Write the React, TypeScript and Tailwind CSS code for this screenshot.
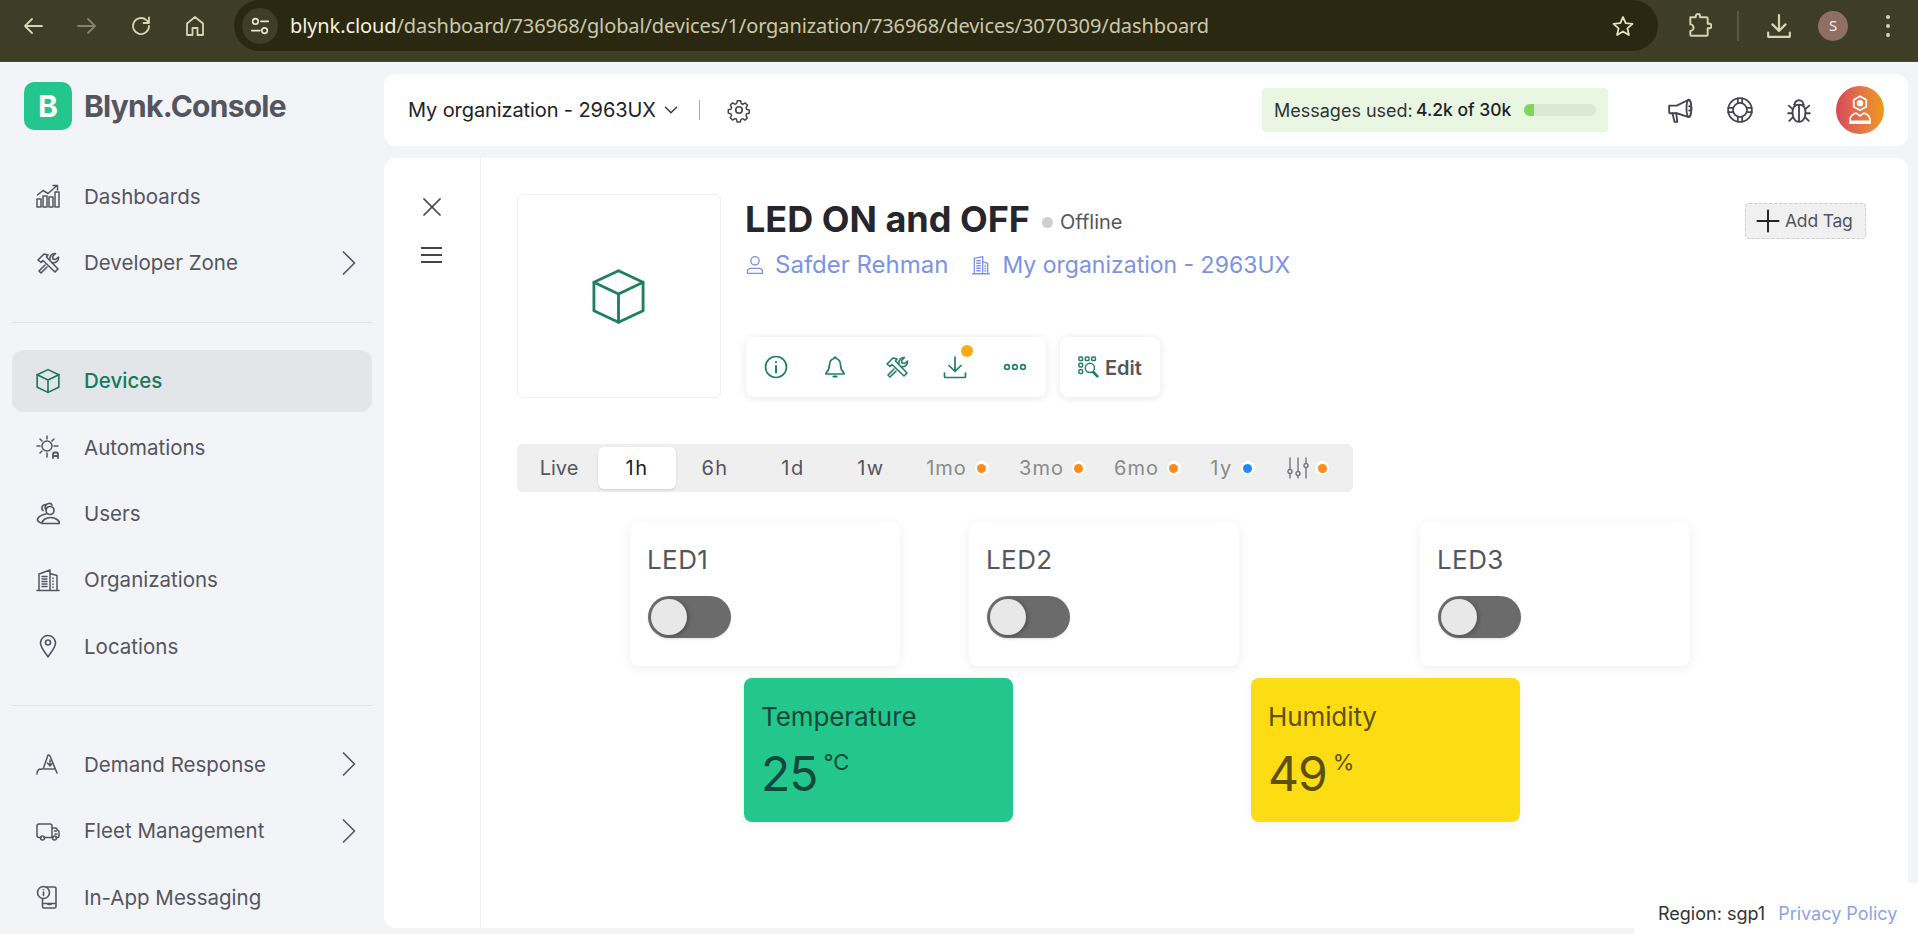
import { ChevronDown, ChevronRight, Plus, X } from "lucide-react";
import type { ReactNode } from "react";

const Svg = ({ className, children, sw = 1.6 }: { className: string; children: ReactNode; sw?: number }) => (
  <svg viewBox="0 0 24 24" fill="none" stroke="currentColor" strokeWidth={sw} strokeLinecap="round" strokeLinejoin="round" className={className}>
    {children}
  </svg>
);

type IconProps = { className: string };

const ChartIcon = ({ className }: IconProps) => (
  <Svg className={className} sw={1.5}>
    <rect x="1" y="15" width="4" height="8" />
    <rect x="7" y="12" width="4" height="11" />
    <rect x="13" y="13" width="4" height="10" />
    <rect x="19" y="8" width="4" height="15" />
    <path d="M1.5 11 7 6.5l5 3L20.500 2M17 1.500h4.500V6" />
  </Svg>
);
const ToolsIcon = ({ className }: IconProps) => (
  <Svg className={className} sw={1.6}>
    <path d="m2 9 6-6 4 1-1.500 2L22 18l-3 3L7 9.500 5 11.500z" />
    <path d="M14 8.500a5 5 0 0 1 5.500-6l-3 3 .5 2.500 2.500.5 3-2.500a5 5 0 0 1-6.500 5.500M9 14l-6 6 2 2 6-6" />
  </Svg>
);
const CubeIcon = ({ className, sw = 1.5 }: IconProps & { sw?: number }) => (
  <Svg className={className} sw={sw}>
    <path d="M12 1.500 22 6.200v11.600L12 22.500 2 17.800V6.200z" />
    <path d="M2 6.200 12 11l10-4.800M12 11v11.500" />
  </Svg>
);
const AutomationIcon = ({ className }: IconProps) => (
  <Svg className={className} sw={1.5}>
    <circle cx="11" cy="11" r="5" />
    <path d="M11 1v3M11 18v4M1 11h3M18 11h4M4 4l2 2M18 4l-2 2M4 18l2-2" />
    <path d="M17 23v-4a1.500 1.500 0 0 1 1.500-1.500h2A1.500 1.500 0 0 1 22 19v4M17 21h5" strokeWidth={1.8} />
  </Svg>
);
const UsersIcon = ({ className }: IconProps) => (
  <Svg className={className} sw={1.7}>
    <circle cx="14" cy="9.500" r="4" />
    <path d="M9.500 8a4 4 0 0 1 3-5.500c1.500-.3 3 .3 3.500 1.500M7 9.500a3.500 3.500 0 0 1 2.500-6" />
    <path d="M6 22.500h17.500c0-3.500-4.500-6-9-6s-8.500 2.500-8.500 6z" />
    <path d="M10 13c-4 .8-8 2.500-8.500 5.500 0 1.500 1.500 2.800 4 3.500" />
  </Svg>
);
const BuildingIcon = ({ className }: IconProps) => (
  <Svg className={className} sw={1.5}>
    <path d="M1 22.500h22M3 22.500V6l11-4v20.500M14 5.500l7 2v15" />
    <path d="M6 8.500h5M6 11h5M6 13.500h5M6 16h5M6 18.500h5M17 10v.5M17 13v.5M17 16v.5M17 19v.5" strokeWidth={1.5} />
  </Svg>
);
const PinIcon = ({ className }: IconProps) => (
  <Svg className={className} sw={1.6}>
    <path d="M12 23c-1.500-3-7.500-9-7.500-14a7.500 7.500 0 0 1 15 0c0 5-6 11-7.500 14z" />
    <circle cx="12" cy="8.500" r="2.500" />
  </Svg>
);
const DemandIcon = ({ className }: IconProps) => (
  <Svg className={className} sw={1.5}>
    <path d="M1 22c0-3 1.500-4.500 3-5 2 0 2.500 1 3.500-1L12 3c1 0 1.500 0 2 1l7 17" />
    <path d="M14 8v5M11.500 11l2.500 3 2.500-3M8 17h12" strokeDasharray="2 1" />
  </Svg>
);
const TruckIcon = ({ className }: IconProps) => (
  <Svg className={className} sw={1.5}>
    <path d="M5 18.500H3a2 2 0 0 1-2-2V7a2 2 0 0 1 2-2h11a2 2 0 0 1 2 2v11.500H8M11 18.500h0" />
    <path d="M16 9h4l3 3.500v4.500a1.500 1.500 0 0 1-1.500 1.500H20M16 18.500h1" />
    <circle cx="6.500" cy="19" r="2" />
    <circle cx="18.500" cy="19" r="2" />
    <path d="M18.500 12h2M19 15h2" />
  </Svg>
);
const InAppIcon = ({ className }: IconProps) => (
  <Svg className={className} sw={1.6}>
    <circle cx="7.500" cy="7.500" r="6" />
    <path d="M7.500 7v3.500M7.500 4.500v.2" />
    <path d="M11 2h7.500A1.500 1.500 0 0 1 20 3.500v18a1.500 1.500 0 0 1-1.500 1.500H8a1.500 1.500 0 0 1-1.500-1.500V14M12 19.500h3M6.500 18.500H20" />
  </Svg>
);
const GearIcon = ({ className }: IconProps) => (
  <Svg className={className} sw={1.5}>
    <circle cx="12" cy="12" r="3" />
    <path d="M10.300 2.500h3.400l.5 2.800 1.700.8 2.500-1.400 2.300 2.500-1.500 2.300.6 1.800 2.700.7v3.300l-2.700.6-.7 1.800 1.500 2.400-2.500 2.300-2.300-1.500-1.800.7-.6 2.600h-3.400l-.5-2.700-1.800-.7-2.300 1.500-2.400-2.400 1.400-2.300-.7-1.800-2.700-.6v-3.400l2.700-.6.7-1.800-1.400-2.300 2.400-2.400 2.300 1.400 1.800-.7z" transform="translate(1.200 1.200) scale(.9)" />
  </Svg>
);
const MegaphoneIcon = ({ className }: IconProps) => (
  <Svg className={className} sw={1.7}>
    <path d="M2 8h7l11-5.500c1.500 0 2.500 4 2.500 8s-1 8-2.500 8L9 15H2.500A1 1 0 0 1 2 14z" />
    <path d="M20 2.500c-1.500 1-2 4.500-2 8s.5 7 2 8M5 15l2 8h2.500L8.500 15" />
    <path d="M20.500 8.500a2 2 0 0 1 0 4" />
  </Svg>
);
const LifebuoyIcon = ({ className }: IconProps) => (
  <Svg className={className} sw={1.6}>
    <circle cx="12" cy="12" r="11" />
    <circle cx="12" cy="12" r="6.500" />
    <path d="M10 1.200v4.500M14 1.200v4.500M10 18.300v4.500M14 18.300v4.500M1.200 10h4.500M1.200 14h4.500M18.300 10h4.500M18.300 14h4.500" />
  </Svg>
);
const BugIcon = ({ className }: IconProps) => (
  <Svg className={className} sw={1.7}>
    <path d="M8 7a4 4 0 0 1 8 0" />
    <path d="M12 7c4 0 6 2.500 6 7s-2 9-6 9-6-4.500-6-9 2-7 6-7zM12 7v16" />
    <path d="M8 7H7.500M16 7h.5M2.500 8 6 11M21.500 8 18 11M2 15h4M22 15h-4M3 22l3.500-3.500M21 22l-3.500-3.500" />
  </Svg>
);
const PersonIcon = ({ className }: IconProps) => (
  <Svg className={className} sw={1.6}>
    <circle cx="12" cy="7" r="5" />
    <path d="M3 22v-2.500A4 4 0 0 1 7 16h10a4 4 0 0 1 4 3.500V22zM3 22h18" />
  </Svg>
);
const SolidBuilding = ({ className }: IconProps) => (
  <Svg className={className} sw={1.6}>
    <path d="M2 22.500h20M4 22.500V4l10-2v20.500M14 8l6 2v12.500" />
    <path d="M7 7h4M7 10h4M7 13h4M7 16h4M7 19h4M17 13v.5M17 16v.5M17 19v.5" strokeWidth={1.8} />
  </Svg>
);
const InfoIcon = ({ className }: IconProps) => (
  <Svg className={className} sw={1.7}>
    <circle cx="12" cy="12" r="10.500" />
    <path d="M12 11v6.500M12 7v.2" strokeWidth={2} />
  </Svg>
);
const BellIcon = ({ className }: IconProps) => (
  <Svg className={className} sw={1.7}>
    <path d="M12 2a1 1 0 0 1 1 1v.500c3 .8 4.500 3.500 4.500 6.500 0 4 1.500 6 3.500 8v1H3v-1c2-2 3.500-4 3.500-8 0-3 1.500-5.700 4.500-6.500V3a1 1 0 0 1 1-1z" />
    <path d="M10.500 21.500h3" strokeWidth={2.200} />
  </Svg>
);
const DownloadIcon = ({ className }: IconProps) => (
  <Svg className={className} sw={1.7}>
    <path d="M12 2v14M6 10.500l6 6 6-6M1.500 18v3.500a1 1 0 0 0 1 1h19a1 1 0 0 0 1-1V18" />
  </Svg>
);
const DotsIcon = ({ className }: IconProps) => (
  <Svg className={className} sw={1.6}>
    <circle cx="4" cy="12" r="2.400" />
    <circle cx="12" cy="12" r="2.400" />
    <circle cx="20" cy="12" r="2.400" />
  </Svg>
);
const EditIcon = ({ className }: IconProps) => (
  <Svg className={className} sw={1.6}>
    <rect x="1" y="1" width="4" height="4" rx="1" />
    <rect x="8" y="1" width="4" height="4" rx="1" />
    <rect x="15" y="1" width="4" height="4" rx="1" />
    <rect x="1" y="8" width="4" height="4" rx="1" />
    <rect x="1" y="15" width="4" height="4" rx="1" />
    <circle cx="13" cy="13" r="5" />
    <path d="m17 17 5 5-1 1-5-5" />
  </Svg>
);
const SlidersIcon = ({ className }: IconProps) => (
  <Svg className={className} sw={1.4}>
    <path d="M4 2v11M4 18v4M12 2v13M12 20v2M20 2v5M20 12v10" />
    <circle cx="4" cy="15.500" r="2" />
    <circle cx="12" cy="17.500" r="2" />
    <circle cx="20" cy="9.500" r="2" />
  </Svg>
);
const AvatarIcon = ({ className }: IconProps) => (
  <svg viewBox="0 0 24 24" fill="none" stroke="#fff" strokeWidth={1.4} strokeLinejoin="round" className={className}>
    <path d="m12 1 5 2.800v5.600L12 12.200 7 9.400V3.800z" />
    <circle cx="12" cy="6.600" r="1.900" fill="#fff" />
    <path d="M4 22.500v-2.700c0-3 3-5 5-5.300l3 2.200 3-2.200c2 .3 5 2.300 5 5.300v2.700z" />
    <path d="M4.500 21.500h15" strokeWidth={2.200} />
  </svg>
);

const BackIcon = ({ className }: IconProps) => (
  <Svg className={className} sw={1.8}>
    <path d="M21 12H4M11 5l-7 7 7 7" />
  </Svg>
);
const ForwardIcon = ({ className }: IconProps) => (
  <Svg className={className} sw={1.8}>
    <path d="M3 12h17M13 5l7 7-7 7" />
  </Svg>
);
const ReloadIcon = ({ className }: IconProps) => (
  <Svg className={className} sw={1.8}>
    <path d="M20 12a8 8 0 1 1-2.500-5.800L20 9M20 3.500V9h-5.500" />
  </Svg>
);
const HomeIcon = ({ className }: IconProps) => (
  <Svg className={className} sw={1.8}>
    <path d="M4 21V9.500L12 3l8 6.500V21h-5.500v-7h-5v7z" />
  </Svg>
);
const TuneIcon = ({ className }: IconProps) => (
  <Svg className={className} sw={1.8}>
    <circle cx="7" cy="7" r="3" />
    <circle cx="17" cy="17" r="3" />
    <path d="M13 7h8M3 17h9" />
  </Svg>
);
const StarIcon = ({ className }: IconProps) => (
  <Svg className={className} sw={1.8}>
    <path d="m12 3 2.700 6.200 6.800.6-5.100 4.500 1.500 6.700-5.900-3.500L6.100 21l1.500-6.700-5.100-4.500 6.800-.6z" />
  </Svg>
);
const PuzzleIcon = ({ className }: IconProps) => (
  <Svg className={className} sw={1.8}>
    <path d="M4 4h5V3a2 2 0 0 1 4 0v1h6a1 1 0 0 1 1 1v5h1.500a2 2 0 0 1 0 4H20v6a1 1 0 0 1-1 1H5a1 1 0 0 1-1-1v-3.500a3 3 0 0 0 0-6V4z" />
  </Svg>
);
const ChromeDownloadIcon = ({ className }: IconProps) => (
  <Svg className={className} sw={2}>
    <path d="M12 2v14M6 10.500l6 6 6-6M2 18v4h20v-4" />
  </Svg>
);

const BrowserBar = () => (
  <div className="h-[62px] bg-[#3e3d25] border-b border-[#4a492e] flex items-start text-[#d5d4b4] shrink-0">
    <div className="w-[234px] h-[51px] flex items-center pl-[21px] gap-[30px]">
      <BackIcon className="w-6 h-6" />
      <ForwardIcon className="w-6 h-6 text-[#85846a]" />
      <ReloadIcon className="w-6 h-6" />
      <HomeIcon className="w-6 h-6" />
    </div>
    <div className="w-[1424px] h-[51px] bg-[#2a2810] rounded-[26px] flex items-center pl-2 pr-[23px]">
      <div className="w-9 h-9 rounded-full bg-[#3e3d25] flex items-center justify-center">
        <TuneIcon className="w-[22px] h-[22px] text-[#e9e8cc]" />
      </div>
      <div className="ml-3 text-[20px] tracking-[-0.1px] font-['Noto_Sans',sans-serif] text-[#c9c8ad] flex-1 whitespace-nowrap">
        <span className="text-[#f3f2dc]">blynk.cloud</span>/dashboard/736968/global/devices/1/organization/736968/devices/3070309/dashboard
      </div>
      <StarIcon className="w-6 h-6 text-[#e3e2c4]" />
    </div>
    <div className="flex-1 h-[51px] flex items-center pl-[29px]">
      <PuzzleIcon className="w-[26px] h-[26px] -ml-[1px] text-[#d5d4b4]" />
      <div className="w-[2px] h-[30px] bg-[#5a5940] ml-[25px]" />
      <ChromeDownloadIcon className="w-[26px] h-[26px] ml-[27px]" />
      <div className="w-[30px] h-[30px] rounded-full bg-[#8f6f64] text-[#f5eeea] text-[15px] flex items-center justify-center ml-[26px] font-['Noto_Sans',sans-serif]">S</div>
      <div className="ml-[38px] flex flex-col gap-[5px]">
        <div className="w-1 h-1 rounded-full bg-[#d5d4b4]" />
        <div className="w-1 h-1 rounded-full bg-[#d5d4b4]" />
        <div className="w-1 h-1 rounded-full bg-[#d5d4b4]" />
      </div>
    </div>
  </div>
);

const NavItem = ({ icon, label, active, chevron }: { icon: ReactNode; label: string; active?: boolean; chevron?: boolean }) => (
  <div className={`h-[62px] rounded-xl flex items-center pl-6 pr-[1px] gap-6 ${active ? "bg-[#e4e5e9] text-[#157a5c] font-medium" : "text-[#55555f]"}`}>
    {icon}
    <span className="text-[20.500px] flex-1 pt-[2px]">{label}</span>
    {chevron && <ChevronRight className="w-11 h-11 text-[#55555f]" strokeWidth={0.9} />}
  </div>
);

const Sidebar = () => (
  <aside className="w-[384px] shrink-0 px-3">
    <div className="h-[103px] flex items-start pt-5 pl-3 gap-3">
      <div className="w-12 h-12 rounded-[10px] bg-[#23c78e] text-white flex items-center justify-center text-[30px] font-bold">B</div>
      <span className="text-[30px] leading-[48px] font-bold text-[#55555f] tracking-[-0.75px]">Blynk.Console</span>
    </div>
    <div className="flex flex-col gap-[4.500px]">
      <NavItem icon={<ChartIcon className="w-6 h-6" />} label="Dashboards" />
      <NavItem icon={<ToolsIcon className="w-6 h-6" />} label="Developer Zone" chevron />
    </div>
    <div className="h-px bg-[#e2e3e8] mt-7 mb-[27px]" />
    <div className="flex flex-col gap-[4.400px]">
      <NavItem icon={<CubeIcon className="w-[26px] h-[26px] -mx-[1px] text-[#157a5c]" />} label="Devices" active />
      <NavItem icon={<AutomationIcon className="w-6 h-6" />} label="Automations" />
      <NavItem icon={<UsersIcon className="w-6 h-6" />} label="Users" />
      <NavItem icon={<BuildingIcon className="w-6 h-6" />} label="Organizations" />
      <NavItem icon={<PinIcon className="w-6 h-6" />} label="Locations" />
    </div>
    <div className="h-px bg-[#e2e3e8] mt-7 mb-[27px]" />
    <div className="flex flex-col gap-[4.500px]">
      <NavItem icon={<DemandIcon className="w-6 h-6" />} label="Demand Response" chevron />
      <NavItem icon={<TruckIcon className="w-6 h-6" />} label="Fleet Management" chevron />
      <NavItem icon={<InAppIcon className="w-6 h-6" />} label="In-App Messaging" />
    </div>
  </aside>
);

const TopBar = () => (
  <div className="h-[72px] bg-white rounded-xl flex items-center pl-6 pr-6 shrink-0">
    <span className="text-[20px] text-[#222226] whitespace-nowrap tracking-[-0.1px]">My organization - 2963UX</span>
    <ChevronDown className="w-[22px] h-[22px] ml-1 text-[#333]" strokeWidth={1.5} />
    <div className="w-px h-5 bg-[#aaa] ml-[17px]" />
    <GearIcon className="w-[26px] h-[26px] ml-[26px] text-[#44444c]" />
    <div className="ml-auto w-[346px] h-11 bg-[#e9f6e2] rounded flex items-center pl-3 text-[18px] text-[#333338] whitespace-nowrap">
      <span className="w-[142px]">Messages used:</span>
      <span className="w-[108px] font-medium text-[17.500px] text-[#222226]">4.2k of 30k</span>
      <div className="w-[72px] h-3 rounded-full bg-[#dbe8d4] overflow-hidden">
        <div className="w-[10px] h-full bg-[#7fd65c]" />
      </div>
    </div>
    <MegaphoneIcon className="w-[26px] h-[26px] ml-[59px] text-[#44444f]" />
    <LifebuoyIcon className="w-[26px] h-[26px] ml-[34px] text-[#44444f]" />
    <BugIcon className="w-[26px] h-[26px] ml-[33px] text-[#44444f]" />
    <div className="w-12 h-12 rounded-full bg-gradient-to-r from-[#d6475a] to-[#ee9a0c] ml-[24px] flex items-center justify-center">
      <AvatarIcon className="w-[30px] h-[30px]" />
    </div>
  </div>
);

const Toggle = () => (
  <div className="w-[83px] h-[42px] rounded-full bg-[#6b6b6b] flex items-center pl-[3px] shadow-sm">
    <div className="w-9 h-9 rounded-full bg-[#e8e8e8] shadow-[2px_1px_4px_rgba(0,0,0,0.25)]" />
  </div>
);

const SwitchCard = ({ label, className }: { label: string; className: string }) => (
  <div className={`w-[270px] h-[144px] bg-white rounded-lg shadow-[0_2px_12px_rgba(0,0,0,0.07)] px-[18px] pt-[22px] ${className}`}>
    <div className="text-[26px] leading-8 text-[#55555f] tracking-[0.4px] mb-[20px] -ml-[1px]">{label}</div>
    <Toggle />
  </div>
);

const ValueCard = ({ label, value, unit, className }: { label: string; value: string; unit: string; className: string }) => (
  <div className={`w-[269px] h-[144px] rounded-lg shadow-[0_2px_12px_rgba(0,0,0,0.05)] px-[17px] pt-[23px] ${className}`}>
    <div className="text-[26px] leading-8 tracking-[-0.1px]">{label}</div>
    <div className="flex items-start mt-[11px]">
      <span className="text-[48px] leading-[60px] tracking-[-1px]">{value}</span>
      <span className="text-[22px] leading-7 ml-[6px] mt-[4px]">{unit}</span>
    </div>
  </div>
);

const Dot = ({ color }: { color: string }) => (
  <span className="w-[14px] h-[14px] rounded-full bg-white flex items-center justify-center">
    <span className={`w-[9px] h-[9px] rounded-full ${color}`} />
  </span>
);

const Tabs = () => (
  <div className="w-[836px] h-12 mt-[46px] bg-[#efefef] rounded-md flex items-center px-[3px] text-[20px] text-[#55555f]">
    <div className="w-[78px] text-center">Live</div>
    <div className="w-[78px] h-[42px] bg-white rounded-md shadow-sm text-[#222226] flex items-center justify-center tracking-[1.5px]">1h</div>
    <div className="w-[78px] text-center tracking-[1.5px]">6h</div>
    <div className="w-[78px] text-center tracking-[1.5px]">1d</div>
    <div className="w-[78px] text-center tracking-[1.5px]">1w</div>
    <div className="w-[95px] flex items-center justify-center gap-2 text-[#8a8a8a] tracking-[1px]">1mo <Dot color="bg-[#ff8c1a]" /></div>
    <div className="w-[95px] flex items-center justify-center gap-2 text-[#8a8a8a] tracking-[1px]">3mo <Dot color="bg-[#ff8c1a]" /></div>
    <div className="w-[95px] flex items-center justify-center gap-2 text-[#8a8a8a] tracking-[1px]">6mo <Dot color="bg-[#ff8c1a]" /></div>
    <div className="w-[75px] flex items-center justify-center gap-2 text-[#8a8a8a] tracking-[1.5px]">1y <Dot color="bg-[#1e88ff]" /></div>
    <div className="w-[75px] flex items-center justify-center gap-[5px] text-[#77777f]">
      <SlidersIcon className="w-6 h-6" />
      <Dot color="bg-[#ff8c1a]" />
    </div>
  </div>
);

const DeviceHeader = () => (
  <div className="flex items-start pr-[42px]">
    <div className="w-[204px] h-[204px] border border-[#eeeeee] rounded-md flex items-center justify-center shrink-0">
      <CubeIcon className="w-[59px] h-[59px] -ml-[1px] text-[#1f7f5f]" sw={1.15} />
    </div>
    <div className="ml-6 flex-1">
      <div className="h-12 flex items-center">
        <span className="text-[36px] font-bold text-[#26262c] mt-[2px]">LED ON and OFF</span>
        <span className="w-[11px] h-[11px] rounded-full bg-[#cfcfcf] ml-3 mt-2" />
        <span className="text-[20px] text-[#55555f] ml-[7px] mt-2">Offline</span>
      </div>
      <div className="h-[46px] flex items-center text-[#7b93e2]">
        <PersonIcon className="w-5 h-5" />
        <span className="ml-[10px] text-[24px]">Safder Rehman</span>
        <SolidBuilding className="w-5 h-5 ml-[23px]" />
        <span className="ml-[11px] text-[23px]">My organization - 2963UX</span>
      </div>
      <div className="flex mt-[49px] ml-[1px] gap-[14px]">
        <div className="w-[300px] h-[60px] bg-white rounded-lg shadow-[0_1px_8px_rgba(0,0,0,0.1)] flex items-center pl-[18px] text-[#1f7f5f]">
          <InfoIcon className="w-[24px] h-[24px]" />
          <BellIcon className="w-[24px] h-[24px] ml-[35px]" />
          <ToolsIcon className="w-[24px] h-[24px] ml-[38px]" />
          <div className="relative ml-[34px]">
            <DownloadIcon className="w-[24px] h-[24px]" />
            <span className="absolute -top-[10px] left-[18px] w-3 h-3 rounded-full bg-[#ffa914]" />
          </div>
          <DotsIcon className="w-[24px] h-[24px] ml-[36px]" />
        </div>
        <div className="w-[100px] h-[60px] bg-white rounded-lg shadow-[0_1px_8px_rgba(0,0,0,0.1)] flex items-center pl-[18px] text-[#55555f]">
          <EditIcon className="w-[22px] h-[22px] text-[#1f7f5f]" />
          <span className="text-[20px] font-semibold ml-[5px] pt-[2px]">Edit</span>
        </div>
      </div>
    </div>
    <div className="w-[121px] h-9 mt-[9px] bg-[#f0f0f0] border border-dashed border-[#cccccc] rounded flex items-center pl-1 text-[17.500px] text-[#55555f] shrink-0 overflow-hidden">
      <Plus className="w-9 h-9 text-[#222226] shrink-0" strokeWidth={1.3} />
      <span className="tracking-[-0.2px] whitespace-nowrap -ml-[1px]">Add Tag</span>
    </div>
  </div>
);

const MainCard = () => (
  <div className="h-[770px] bg-white rounded-xl flex">
    <div className="w-[97px] border-r border-[#eeeeee] flex flex-col items-center pt-[33px] pr-[1px] shrink-0 text-[#44444c]">
      <X className="w-8 h-8" strokeWidth={1.3} />
      <div className="mt-[24px] flex flex-col gap-[5px]">
        <div className="w-[21px] h-[2px] bg-[#44444c]" />
        <div className="w-[21px] h-[2px] bg-[#44444c]" />
        <div className="w-[21px] h-[2px] bg-[#44444c]" />
      </div>
    </div>
    <div className="flex-1 pl-9 pt-9">
      <DeviceHeader />
      <Tabs />
      <div className="flex mt-[30px] ml-[113px]">
        <SwitchCard label="LED1" className="" />
        <SwitchCard label="LED2" className="ml-[69px]" />
        <SwitchCard label="LED3" className="ml-[181px]" />
      </div>
      <div className="flex mt-3 ml-[227px]">
        <ValueCard label="Temperature" value="25" unit="°C" className="bg-[#23c78e] text-[#14493a]" />
        <ValueCard label="Humidity" value="49" unit="%" className="ml-[238px] bg-[#fcdc12] text-[#5c500a]" />
      </div>
    </div>
  </div>
);

export default function App() {
  return (
    <div className="relative w-[1918px] h-[934px] overflow-hidden bg-[#f2f4f8] flex flex-col font-['Inter',sans-serif]">
      <BrowserBar />
      <div className="flex flex-1">
        <Sidebar />
        <main className="w-[1524px] pt-3 flex flex-col gap-3">
          <TopBar />
          <MainCard />
        </main>
      </div>
      {/* region strip sits over the bottom corner of the card */}
      <div className="absolute right-0 bottom-0 w-[284px] h-[51px] bg-white flex items-center pl-6 pt-[9px] whitespace-nowrap">
        <span className="text-[#333338] text-[18px]">Region: sgp1</span>
        <span className="text-[#8ea3e6] text-[18px] ml-[13px]">Privacy Policy</span>
      </div>
    </div>
  );
}
